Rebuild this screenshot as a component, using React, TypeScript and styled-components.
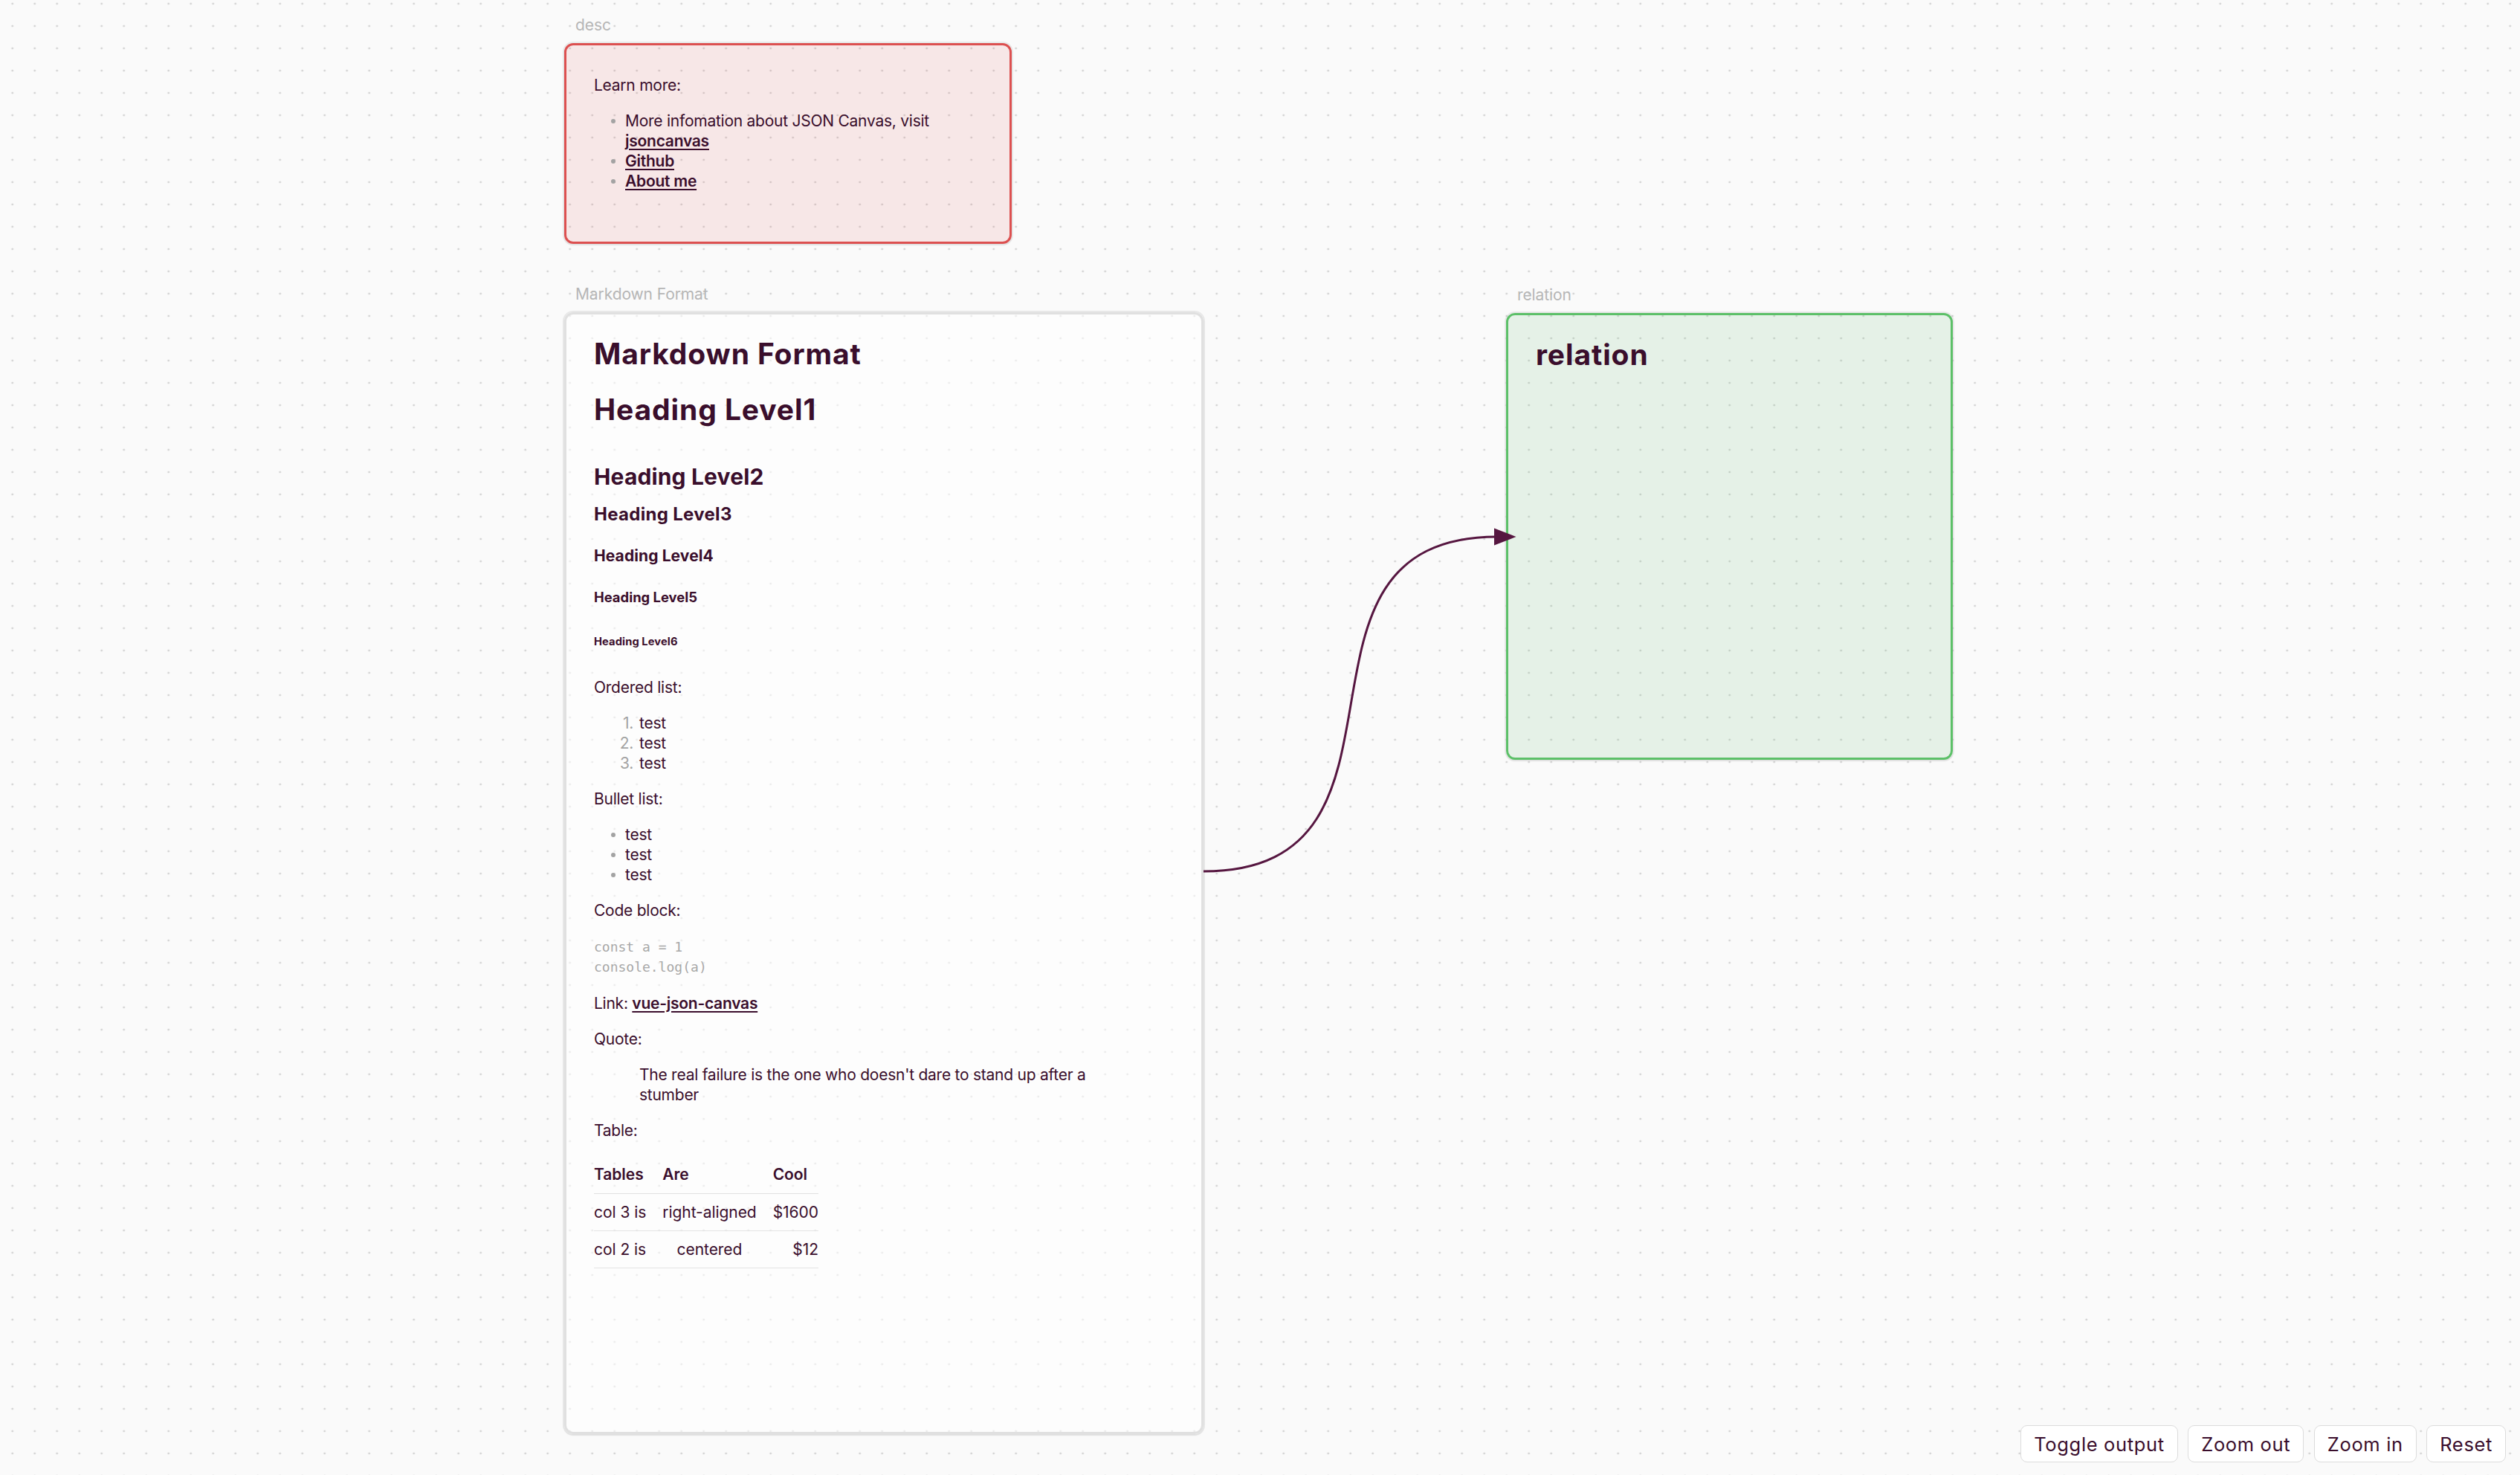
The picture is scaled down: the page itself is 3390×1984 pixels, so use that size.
import React from 'react';
import styled, { createGlobalStyle } from 'styled-components';

const INK = '#3a0e2c';

const GlobalStyle = createGlobalStyle`
  html, body { margin: 0; padding: 0; }
  body {
    background: #fafafa;
    font-family: Inter, "Noto Sans", "Liberation Sans", sans-serif;
    color: ${INK};
  }
  * { box-sizing: border-box; }
`;

const Canvas = styled.div`
  position: relative;
  width: 3390px;
  height: 1984px;
  overflow: hidden;
  background-color: #fafafa;
  background-image: radial-gradient(circle, #d3d3d3 1.2px, transparent 1.7px);
  background-size: 30px 30px;
  background-position: 1.7px 20px;
`;

const NodeWrap = styled.div<{ $x: number; $y: number; $w: number; $h: number }>`
  position: absolute;
  left: ${(p) => p.$x}px;
  top: ${(p) => p.$y}px;
  width: ${(p) => p.$w}px;
  height: ${(p) => p.$h}px;
`;

const NodeLabel = styled.div`
  position: absolute;
  left: 15px;
  bottom: calc(100% + 11px);
  font-size: 21px;
  line-height: 27px;
  letter-spacing: -0.1px;
  color: #b6b6b6;
  white-space: nowrap;
`;

const Card = styled.div<{ $border: string; $bg: string }>`
  width: 100%;
  height: 100%;
  border: 3px solid ${(p) => p.$border};
  border-radius: 12px;
  background: ${(p) => p.$bg};
  box-shadow: 0 0 0 2px rgba(0, 0, 0, 0.07), 0 2px 3px rgba(0, 0, 0, 0.04);
  padding: 18px 37px;
  overflow: hidden;
  display: flex;
  flex-direction: column;
  align-items: flex-start;
  font-size: 21px;
  line-height: 27px;
  letter-spacing: -0.25px;
`;

const Heading = styled.div<{ $size: number; $lh: number; $gap: number; $track: number }>`
  margin: ${(p) => p.$gap}px 0 0;
  font-size: ${(p) => p.$size}px;
  line-height: ${(p) => p.$lh}px;
  font-weight: 700;
  letter-spacing: ${(p) => p.$track}px;
`;

const Para = styled.p<{ $gap?: number }>`
  margin: ${(p) => p.$gap ?? 21.2}px 0 0;
  font-size: 21px;
  line-height: 27px;
`;

const Link = styled.a`
  color: inherit;
  font-weight: 600;
  text-decoration: underline;
  text-decoration-thickness: 1.5px;
  text-underline-offset: 3px;
`;

const BulletList = styled.ul`
  list-style: none;
  margin: 21.2px 0 0;
  padding: 0 0 0 42px;
`;

const BulletItem = styled.li`
  position: relative;
  &::before {
    content: '';
    position: absolute;
    left: -19.5px;
    top: 10.5px;
    width: 6.5px;
    height: 6.5px;
    border-radius: 50%;
    background: #a3a3a3;
  }
`;

const NumberList = styled.ol`
  list-style: none;
  counter-reset: num;
  margin: 21.2px 0 0;
  padding: 0 0 0 61px;
`;

const NumberItem = styled.li`
  position: relative;
  counter-increment: num;
  &::before {
    content: counter(num) '.';
    position: absolute;
    right: calc(100% + 8px);
    top: 0;
    color: #a3a3a3;
  }
`;

const CodeBlock = styled.pre`
  margin: 21.2px 0 0;
  font-family: "DejaVu Sans Mono", "Liberation Mono", monospace;
  font-size: 18px;
  line-height: 27.4px;
  letter-spacing: 0;
  color: #a8a8a8;
`;

const Quote = styled.blockquote`
  margin: 21.2px 60px 0 61px;
  padding: 0;
  align-self: stretch;
`;

const Table = styled.table`
  margin-top: 31.5px;
  border-collapse: collapse;
  font-size: 21px;
  line-height: 27px;
  letter-spacing: -0.05px;
`;

const Th = styled.th`
  text-align: left;
  font-weight: 600;
  padding: 0 11px 12px;
  border-bottom: 1.5px solid #e1e1e1;
  &:first-child { padding-left: 0; }
  &:last-child { padding-right: 0; }
`;

const Td = styled.td<{ $align?: 'left' | 'center' | 'right' }>`
  text-align: ${(p) => p.$align ?? 'left'};
  padding: 11px;
  border-bottom: 1.5px solid #e4e4e4;
  &:first-child { padding-left: 0; }
  &:last-child { padding-right: 0; }
`;

const EdgeLayer = styled.svg`
  position: absolute;
  left: 0;
  top: 0;
  pointer-events: none;
`;

const Toolbar = styled.div`
  position: absolute;
  right: 19px;
  bottom: 17px;
  display: flex;
  gap: 13.5px;
`;

const ToolButton = styled.button`
  height: 50px;
  padding: 0 17px;
  border: 1.5px solid #dcdcdc;
  border-radius: 9px;
  background: #ffffff;
  color: ${INK};
  font-family: Inter, "Noto Sans", sans-serif;
  font-size: 25.5px;
  letter-spacing: 0.65px;
  cursor: pointer;
`;

const EDGE = '#561640';

export default function App() {
  return (
    <>
      <GlobalStyle />
      <Canvas>
        <NodeWrap $x={759} $y={58} $w={602} $h={270}>
          <NodeLabel>desc</NodeLabel>
          <Card $border="#dc5050" $bg="rgba(222, 70, 70, 0.1)">
            <Para $gap={22}>Learn more:</Para>
            <BulletList>
              <BulletItem>
                More infomation about JSON Canvas, visit <Link href="#">jsoncanvas</Link>
              </BulletItem>
              <BulletItem>
                <Link href="#">Github</Link>
              </BulletItem>
              <BulletItem>
                <Link href="#">About me</Link>
              </BulletItem>
            </BulletList>
          </Card>
        </NodeWrap>

        <NodeWrap $x={759} $y={420} $w={860} $h={1509}>
          <NodeLabel>Markdown Format</NodeLabel>
          <Card $border="#e0e0e0" $bg="rgba(255, 255, 255, 0.55)">
            <Heading as="h1" $size={39} $lh={47} $gap={11} $track={0.9}>Markdown Format</Heading>
            <Heading as="h1" $size={39} $lh={47} $gap={28} $track={0.9}>Heading Level1</Heading>
            <Heading as="h2" $size={30} $lh={37} $gap={49} $track={0.15}>Heading Level2</Heading>
            <Heading as="h3" $size={24} $lh={30} $gap={16.7} $track={0.3}>Heading Level3</Heading>
            <Heading as="h4" $size={21} $lh={27} $gap={27.2} $track={0.1}>Heading Level4</Heading>
            <Heading as="h5" $size={18.4} $lh={24} $gap={30.5} $track={0}>Heading Level5</Heading>
            <Heading as="h6" $size={14.7} $lh={20} $gap={38} $track={0.1}>Heading Level6</Heading>
            <Para $gap={37.3}>Ordered list:</Para>
            <NumberList>
              <NumberItem>test</NumberItem>
              <NumberItem>test</NumberItem>
              <NumberItem>test</NumberItem>
            </NumberList>
            <Para>Bullet list:</Para>
            <BulletList>
              <BulletItem>test</BulletItem>
              <BulletItem>test</BulletItem>
              <BulletItem>test</BulletItem>
            </BulletList>
            <Para>Code block:</Para>
            <CodeBlock>{'const a = 1\nconsole.log(a)'}</CodeBlock>
            <Para>
              Link: <Link href="#">vue-json-canvas</Link>
            </Para>
            <Para>Quote:</Para>
            <Quote>The real failure is the one who doesn't dare to stand up after a stumber</Quote>
            <Para>Table:</Para>
            <Table>
              <thead>
                <tr>
                  <Th>Tables</Th>
                  <Th>Are</Th>
                  <Th>Cool</Th>
                </tr>
              </thead>
              <tbody>
                <tr>
                  <Td>col 3 is</Td>
                  <Td>right-aligned</Td>
                  <Td $align="right">$1600</Td>
                </tr>
                <tr>
                  <Td>col 2 is</Td>
                  <Td $align="center">centered</Td>
                  <Td $align="right">$12</Td>
                </tr>
              </tbody>
            </Table>
          </Card>
        </NodeWrap>

        <NodeWrap $x={2026} $y={421} $w={601} $h={601}>
          <NodeLabel>relation</NodeLabel>
          <Card $border="#5cc068" $bg="rgba(80, 185, 95, 0.12)">
            <Heading as="h1" $size={39} $lh={47} $gap={11} $track={0.9}>relation</Heading>
          </Card>
        </NodeWrap>

        <EdgeLayer width={3390} height={1984} viewBox="0 0 3390 1984">
          <path
            d="M1619 1172 C1939 1172, 1696 722, 2014 722"
            fill="none"
            stroke={EDGE}
            strokeWidth={3}
          />
          <polygon points="2010,710.5 2039.5,722 2010,733.5" fill={EDGE} />
        </EdgeLayer>

        <Toolbar>
          <ToolButton>Toggle output</ToolButton>
          <ToolButton>Zoom out</ToolButton>
          <ToolButton>Zoom in</ToolButton>
          <ToolButton>Reset</ToolButton>
        </Toolbar>
      </Canvas>
    </>
  );
}
